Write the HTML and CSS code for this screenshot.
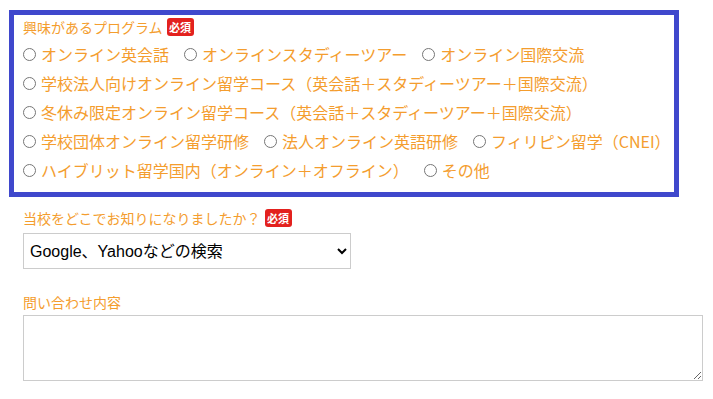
FILE: index.html
```html
<!DOCTYPE html>
<html lang="ja">
<head>
<meta charset="utf-8">
<link rel="stylesheet" href="styles.css">
</head>
<body>
<form class="form">
  <div class="box">
    <div class="label-row"><span>興味があるプログラム</span><span class="badge">必須</span></div>
    <div class="opt-row">
      <label class="opt"><input type="radio" name="p"><span>オンライン英会話</span></label>
      <label class="opt"><input type="radio" name="p"><span>オンラインスタディーツアー</span></label>
      <label class="opt"><input type="radio" name="p"><span>オンライン国際交流</span></label>
    </div>
    <div class="opt-row">
      <label class="opt"><input type="radio" name="p"><span>学校法人向けオンライン留学コース（英会話＋スタディーツアー＋国際交流）</span></label>
    </div>
    <div class="opt-row">
      <label class="opt"><input type="radio" name="p"><span>冬休み限定オンライン留学コース（英会話＋スタディーツアー＋国際交流）</span></label>
    </div>
    <div class="opt-row">
      <label class="opt"><input type="radio" name="p"><span>学校団体オンライン留学研修</span></label>
      <label class="opt"><input type="radio" name="p"><span>法人オンライン英語研修</span></label>
      <label class="opt"><input type="radio" name="p"><span>フィリピン留学（CNEI）</span></label>
    </div>
    <div class="opt-row">
      <label class="opt"><input type="radio" name="p"><span>ハイブリット留学国内（オンライン＋オフライン）</span></label>
      <label class="opt"><input type="radio" name="p"><span>その他</span></label>
    </div>
  </div>
  <div class="field">
    <div class="label-row label-2"><span>当校をどこでお知りになりましたか？</span><span class="badge">必須</span></div>
    <select class="select">
      <option>Google、Yahooなどの検索</option>
    </select>
    <div class="label-row label-3"><span>問い合わせ内容</span></div>
    <textarea class="textarea"></textarea>
  </div>
</form>
</body>
</html>
```
FILE: styles.css
```css
html, body {
  margin: 0;
  background: #fff;
}
body {
  font-family: "Noto Sans CJK JP", "Noto Sans", sans-serif;
}
.form {
  padding: 10px 0 0 9px;
}
.box {
  box-sizing: border-box;
  width: 670px;
  border: 5px solid #3f48cc;
  padding: 3px 9px 7px;
}
.label-row {
  display: flex;
  align-items: center;
  height: 18px;
  font-size: 14px;
  line-height: 18px;
  color: #f49d2e;
  gap: 4px;
}
.badge {
  display: inline-flex;
  align-items: center;
  justify-content: center;
  width: 27px;
  height: 18px;
  border-radius: 3px;
  background: #e3211e;
  color: #fff;
  font-size: 11px;
  font-weight: bold;
}
.box .label-row {
  margin-bottom: 4px;
}
.opt-row {
  display: flex;
  align-items: center;
  height: 29px;
}
.opt {
  display: flex;
  align-items: center;
  margin-right: 15px;
  font-size: 16px;
  line-height: 29px;
  color: #f49d2e;
  white-space: nowrap;
}
.opt input {
  width: 13px;
  height: 13px;
  margin: 0 5px 0 0;
}
.field {
  margin-left: 14px;
}
.label-2 {
  margin-top: 12px;
}
.select {
  display: block;
  margin-top: 6px;
  box-sizing: border-box;
  width: 328px;
  height: 36px;
  border: 1px solid #ccc;
  border-radius: 0;
  background: #fff;
  color: #000;
  font-family: "Liberation Sans", "Noto Sans CJK JP", sans-serif;
  font-size: 16px;
  padding: 0 2px;
}
.label-3 {
  margin-top: 24px;
}
.textarea {
  display: block;
  margin-top: 4px;
  box-sizing: border-box;
  width: 680px;
  height: 66px;
  border: 1px solid #ccc;
  border-radius: 0;
}
```
